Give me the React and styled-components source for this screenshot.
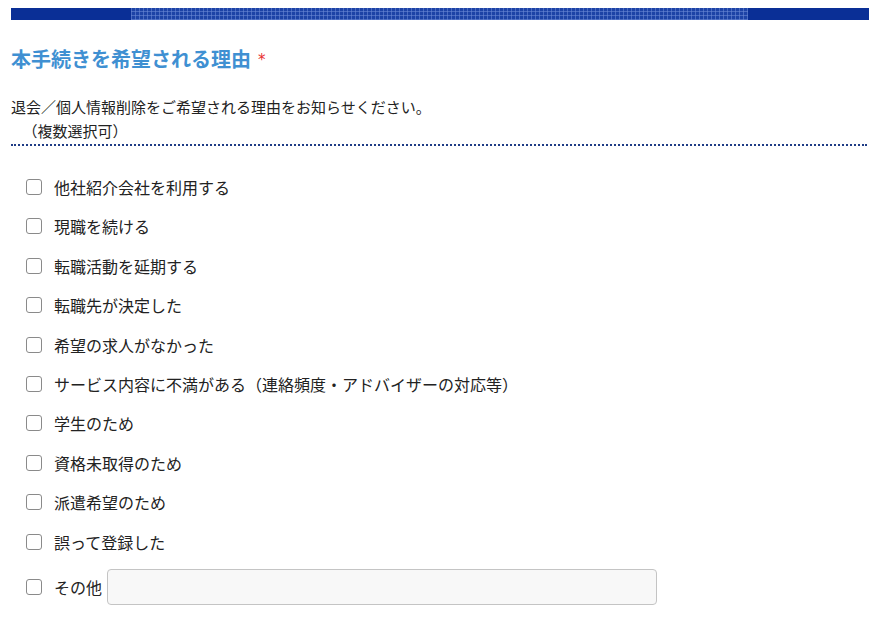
import React from "react";
import styled, { createGlobalStyle } from "styled-components";

const Global = createGlobalStyle`
  html, body { margin: 0; padding: 0; background: #fff; }
  body {
    font-family: "Noto Sans CJK JP", "Noto Sans", sans-serif;
    color: #333;
  }
`;

const Page = styled.div`
  margin: 8px 7px 0 11px;
`;

const Bar = styled.div`
  height: 12px;
  background:
    linear-gradient(90deg, #0a2f96 0, #0a2f96 120px, transparent 120px, transparent 737px, #0a2f96 737px, #0a2f96 100%),
    repeating-linear-gradient(90deg, rgba(110,140,215,0.55) 0 1px, transparent 1px 4px),
    repeating-linear-gradient(0deg, rgba(110,140,215,0.55) 0 1px, transparent 1px 4px),
    #1d43a6;
`;

const Title = styled.h2`
  margin: 24px 0 0;
  font-size: 20px;
  line-height: 30px;
  font-weight: 700;
  color: #3f90d2;
`;

const Required = styled.span`
  color: #e8312f;
  font-family: "DejaVu Sans", sans-serif;
  font-size: 15px;
  font-weight: 400;
  margin-left: 7px;
  vertical-align: 2px;
`;

const Lead = styled.p`
  margin: 20px 2px 0 0;
  font-size: 15px;
  line-height: 24px;
  color: #222;
  padding: 0 0 1px;
  border-bottom: 2px dotted #1f3c86;
  & > span { display: block; }
`;

const Indent = styled.span`
  padding-left: 4px;
`;

const List = styled.ul`
  list-style: none;
  margin: 29px 0 0;
  padding: 0 0 0 15px;
  display: flex;
  flex-direction: column;
  gap: 15.4px;
`;

const Row = styled.li`
  display: flex;
  align-items: center;
  min-height: 24px;
  font-size: 16px;
  line-height: 24px;
  color: #222;
`;

const Label = styled.label`
  display: flex;
  align-items: center;
  gap: 12px;
`;

const Box = styled.input.attrs({ type: "checkbox" })`
  appearance: none;
  margin: 0;
  width: 16px;
  height: 16px;
  border: 1px solid #8a8a8a;
  border-radius: 3px;
  background: #fff;
  box-sizing: border-box;
  flex: none;
`;

const Other = styled.input.attrs({ type: "text" })`
  margin-left: 5px;
  width: 550px;
  height: 36px;
  box-sizing: border-box;
  border: 1px solid #c4c4c4;
  border-radius: 4px;
  background: #f8f8f8;
  font-size: 15px;
  padding: 0 8px;
`;

const items = [
  "他社紹介会社を利用する",
  "現職を続ける",
  "転職活動を延期する",
  "転職先が決定した",
  "希望の求人がなかった",
  "サービス内容に不満がある（連絡頻度・アドバイザーの対応等）",
  "学生のため",
  "資格未取得のため",
  "派遣希望のため",
  "誤って登録した",
];

export default function App() {
  return (
    <>
      <Global />
      <Page>
        <Bar />
        <Title>
          本手続きを希望される理由<Required>*</Required>
        </Title>
        <Lead>
          <span>退会／個人情報削除をご希望される理由をお知らせください。</span>
          <Indent>　（複数選択可）</Indent>
        </Lead>
        <List>
          {items.map((t) => (
            <Row key={t}>
              <Label>
                <Box />
                {t}
              </Label>
            </Row>
          ))}
          <Row>
            <Label>
              <Box />
              その他
            </Label>
            <Other />
          </Row>
        </List>
      </Page>
    </>
  );
}
